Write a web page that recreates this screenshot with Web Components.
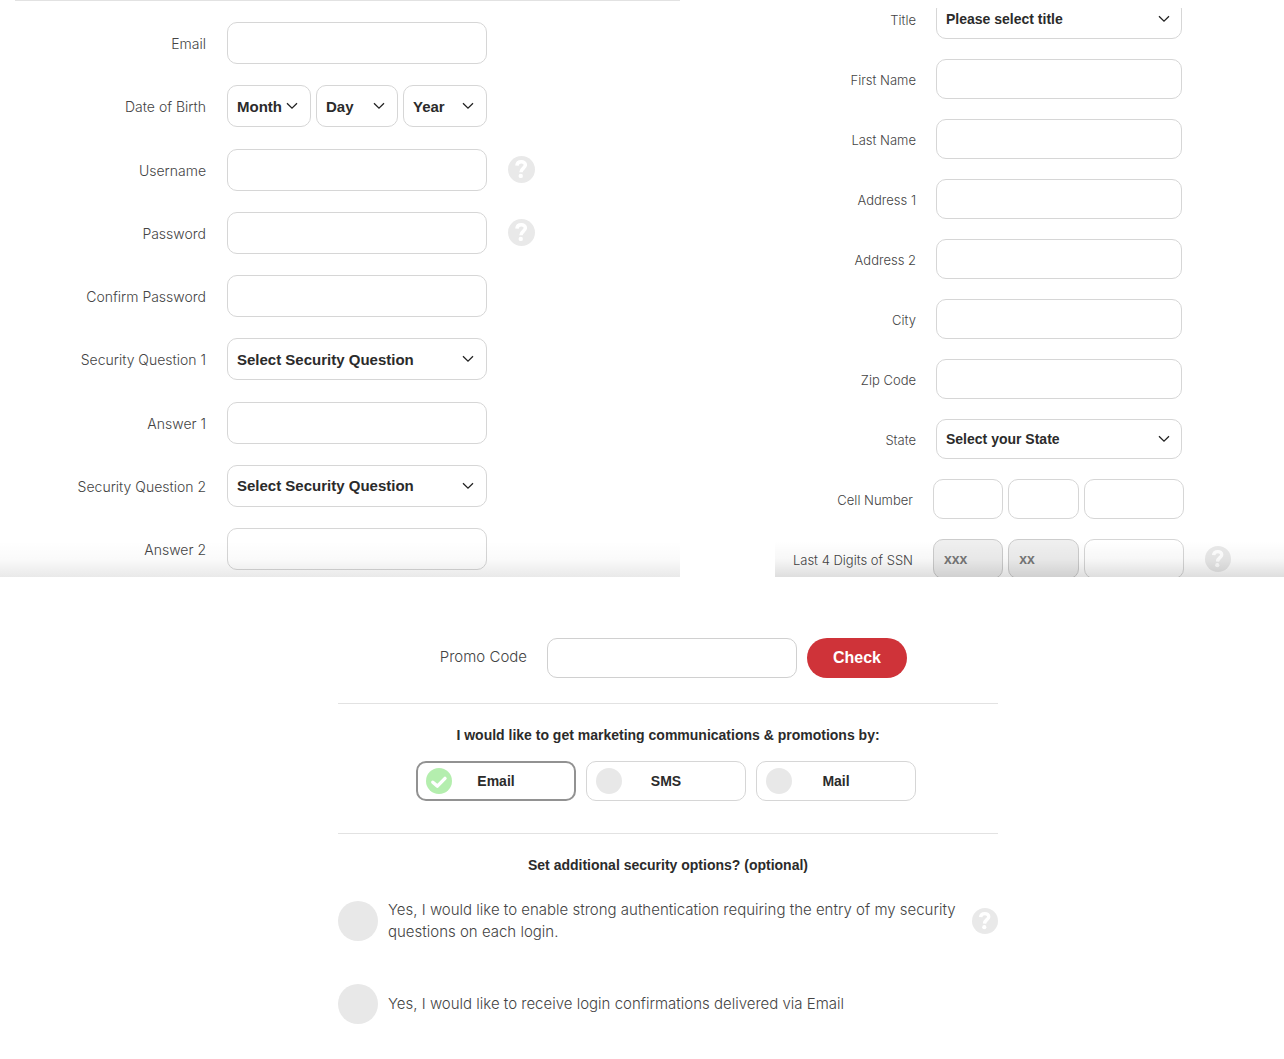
<!DOCTYPE html>
<html lang="en">
<head>
<meta charset="utf-8">
<title>Create account</title>
<style>
  body { margin: 0; background: #fff; color: #444; font-family: "Liberation Sans", Arial, sans-serif; font-size: 14px; --light: 300 14px/18px Inter, sans-serif; }
</style>
</head>
<body>
<registration-page></registration-page>

<template id="t-page">
  <style>
    :host { display: block; }
    .top { display: grid; grid-template-columns: 680fr 95fr 509fr; }
    .address { grid-column: 3; }
  </style>
  <div class="top">
    <form-panel class="account" style="--row:42px; --label:206px; --gap:21px; --field:260px; --fade:.085; --size:15px; --text:14px; --arrow:13px; --help:27px">
      <field-row label="Email"></field-row>
      <field-row label="Date of Birth" parts="Month,Day,Year" kind="selects"></field-row>
      <field-row label="Username" help></field-row>
      <field-row label="Password" type="password" help></field-row>
      <field-row label="Confirm Password" type="password"></field-row>
      <field-row label="Security Question 1" kind="select" value="Select Security Question"></field-row>
      <field-row label="Answer 1"></field-row>
      <field-row label="Security Question 2" kind="select" value="Select Security Question"></field-row>
      <field-row label="Answer 2"></field-row>
    </form-panel>
    <form-panel class="address" clipped style="--row:40px; --label:141px; --gap:20px; --field:246px; --fade:.13">
      <field-row label="Title" kind="select" value="Please select title"></field-row>
      <field-row label="First Name"></field-row>
      <field-row label="Last Name"></field-row>
      <field-row label="Address 1"></field-row>
      <field-row label="Address 2"></field-row>
      <field-row label="City"></field-row>
      <field-row label="Zip Code"></field-row>
      <field-row label="State" kind="select" value="Select your State"></field-row>
      <field-row label="Cell Number" kind="inputs" parts=",,"></field-row>
      <field-row label="Last 4 Digits of SSN" kind="inputs" parts="xxx,xx," help></field-row>
    </form-panel>
  </div>
  <preferences-section></preferences-section>
</template>

<template id="t-panel">
  <style>
    :host { display: flex; position: relative; overflow: hidden; }
    .rows { flex: 1; display: flex; flex-direction: column; justify-content: space-between; padding: 22px 0 7px; }
    .rule { position: absolute; top: 0; left: 15px; right: 0; border-top: 1px solid #e2e2e2; }
    :host([clipped]) { margin-top: 8px; }
    :host([clipped]) .rows { padding: 0; margin: -9px 0 -2px; gap: 20px; }
    :host([clipped]) .rule { display: none; }
    :host::after { content: ""; position: absolute; left: 0; right: 0; bottom: 0; height: 36px; pointer-events: none;
      background: linear-gradient(to bottom, transparent, rgb(0 0 0 / calc(var(--fade) * .25)) 50%, rgb(0 0 0 / var(--fade))); }
  </style>
  <div class="rule"></div>
  <div class="rows"><slot></slot></div>
</template>

<template id="t-row">
  <style>
    :host { display: flex; align-items: center; height: var(--row); font-size: var(--size, 14px); }
    .label { width: var(--label); margin-right: var(--gap); text-align: right; font: var(--light); font-size: var(--text, 13px); padding-top: 2px; box-sizing: border-box; white-space: nowrap; }
    .control { width: var(--field); display: grid; height: 100%; }
    .selects { grid-template-columns: 84fr 82fr 84fr; column-gap: 5px; }
    .inputs { grid-template-columns: 70fr 70fr 100fr; column-gap: 5px; width: 251px; }
    :host([kind="inputs"]) .label { width: calc(var(--label) - 3px); }
    input, select { box-sizing: border-box; width: 100%; min-width: 0; height: 100%; margin: 0; border: 1px solid #d6d6d6; border-radius: 10px; background: #fff;
      font: bold 1em "Liberation Sans", Arial, sans-serif; color: #2b2b2b; padding: 0 10px; outline: 0; }
    select { appearance: none; padding: 0 9px; grid-area: 1 / 1; }
    input:disabled { background: #efefef; color: #777; border-color: #ccc; }
    .pick { display: grid; align-items: center; height: 100%; min-height: 0; }
    .pick svg { grid-area: 1 / 1; justify-self: end; width: 12px; height: 8px; margin-right: var(--arrow, 12px); pointer-events: none; }
    help-tip { margin-left: 21px; }
  </style>
</template>

<template id="t-help">
  <style>
    :host { display: block; flex: none; width: var(--help, 26px); height: var(--help, 26px); }
    button { display: block; width: 100%; height: 100%; padding: 0; border: 0; background: none; }
    svg { display: block; width: 100%; height: 100%; }
  </style>
  <button type="button" aria-label="Help">
    <svg viewBox="0 0 26 26"><circle cx="13" cy="13" r="13" fill="#e9e9e9"/>
      <path d="M8.6 9.2C9 4.4 17 4.6 16.7 8.9C16.5 11.6 12.6 11.8 12.5 15.6" fill="none" stroke="#fff" stroke-width="3.4"/>
      <circle cx="12.3" cy="19.2" r="2.1" fill="#fff"/></svg>
  </button>
</template>

<template id="t-check">
  <style>
    :host { display: block; }
    label { display: grid; align-items: center; box-sizing: border-box; }
    input { appearance: none; margin: 0; border-radius: 50%; background: #e8e8e8; grid-area: 1 / 1; }
    svg { grid-area: 1 / 1; display: none; pointer-events: none; }
    input:checked { background: #b4eeae; }
    input:checked + svg { display: block; }
    :host([kind="pill"]) label { grid-template-columns: 26px 1fr 26px; height: 40px; padding: 0 9px; border: 1px solid #d6d6d6; border-radius: 10px; font-weight: bold; color: #2b2b2b; text-align: center; }
    :host([kind="pill"]) label:has(:checked) { border: 2px solid #929292; padding: 0 8px; }
    :host([kind="pill"]) input, svg { width: 26px; height: 26px; }
    :host([kind="line"]) { flex: 1; }
    :host([kind="line"]) label { grid-template-columns: 40px 1fr; column-gap: 10px; font: var(--light); font-size: 15px; line-height: 22px; }
    :host([kind="line"]) input { width: 40px; height: 40px; }
  </style>
  <label><input type="checkbox"><svg viewBox="0 0 26 26"><path d="M6.8 14.2l4.6 3.9 7.6-7.7" fill="none" stroke="#fff" stroke-width="3.4" stroke-linecap="round" stroke-linejoin="round"/></svg><span><slot></slot></span></label>
</template>

<template id="t-prefs">
  <style>
    :host { display: block; padding: 61px 0 35px 52px; }
    .inner { max-width: 660px; margin: 0 auto; }
    .promo { display: flex; align-items: center; padding-bottom: 25px; }
    .promo label { width: 189px; margin-right: 20px; text-align: right; font: var(--light); font-size: 15px; line-height: 22px; padding-bottom: 2px; }
    .promo input { box-sizing: border-box; width: 250px; height: 40px; border: 1px solid #d0d0d0; border-radius: 10px; padding: 0 10px; font: bold 14px "Liberation Sans", sans-serif; }
    .promo button { width: 100px; height: 40px; margin-left: 10px; border: 0; border-radius: 20px; background: #cf3339; color: #fff; font: bold 16px "Liberation Sans", sans-serif; }
    hr { border: 0; border-top: 1px solid #e2e2e2; margin: 0; }
    h2 { margin: 0; padding-top: 22px; font-size: 14px; line-height: 18px; text-align: center; color: #2b2b2b; }
    .channels { display: grid; grid-template-columns: repeat(3, 160px); justify-content: center; gap: 10px; padding: 17px 4px 32px 0; }
    .option { display: flex; align-items: center; min-height: 44px; }
    .first { padding: 25px 0 39px; }
  </style>
  <div class="inner">
    <div class="promo"><label for="promo">Promo Code</label><input id="promo"><button type="button">Check</button></div>
    <hr>
    <h2>I would like to get marketing communications &amp; promotions by:</h2>
    <div class="channels">
      <check-option kind="pill" checked>Email</check-option>
      <check-option kind="pill">SMS</check-option>
      <check-option kind="pill">Mail</check-option>
    </div>
    <hr>
    <h2>Set additional security options? (optional)</h2>
    <div class="option first"><check-option kind="line">Yes, I would like to enable strong authentication requiring the entry of my security<br>questions on each login.</check-option><help-tip></help-tip></div>
    <div class="option"><check-option kind="line">Yes, I would like to receive login confirmations delivered via Email</check-option></div>
  </div>
</template>

<script>
  class Base extends HTMLElement {
    constructor(id) {
      super();
      this.attachShadow({ mode: "open" }).append(document.getElementById(id).content.cloneNode(true));
    }
  }
  const chevron = '<svg viewBox="0 0 12 8"><path d="M1 1.2l5 5 5-5" fill="none" stroke="#222" stroke-width="1.3"/></svg>';
  const pick = (text, attrs) => `<div class="pick"><select ${attrs}><option>${text}</option></select>${chevron}</div>`;

  customElements.define("help-tip", class extends Base { constructor() { super("t-help"); } });
  customElements.define("form-panel", class extends Base { constructor() { super("t-panel"); } });
  customElements.define("field-row", class extends Base {
    constructor() { super("t-row"); }
    connectedCallback() {
      if (this.ready) return;
      this.ready = true;
      const name = this.getAttribute("label");
      const kind = this.getAttribute("kind") || "input";
      const parts = (this.getAttribute("parts") || "").split(",");
      let body;
      if (kind === "select") body = pick(this.getAttribute("value"), 'id="c"');
      else if (kind === "selects") body = parts.map((p, i) => pick(p, i ? `aria-label="${p}"` : 'id="c"')).join("");
      else if (kind === "inputs") body = parts.map((p, i) => `<input ${i ? `aria-label="${name}, part ${i + 1}"` : 'id="c"'} ${p ? `value="${p}" disabled` : ""}>`).join("");
      else body = `<input id="c" type="${this.getAttribute("type") || "text"}">`;
      this.shadowRoot.append(document.createRange().createContextualFragment(
        `<label class="label" for="c">${name}</label><div class="control ${kind}">${body}</div>${this.hasAttribute("help") ? "<help-tip></help-tip>" : ""}`));
    }
  });
  customElements.define("check-option", class extends Base {
    constructor() { super("t-check"); }
    connectedCallback() { this.shadowRoot.querySelector("input").checked = this.hasAttribute("checked"); }
  });
  customElements.define("preferences-section", class extends Base { constructor() { super("t-prefs"); } });
  customElements.define("registration-page", class extends Base { constructor() { super("t-page"); } });
</script>
</body>
</html>
